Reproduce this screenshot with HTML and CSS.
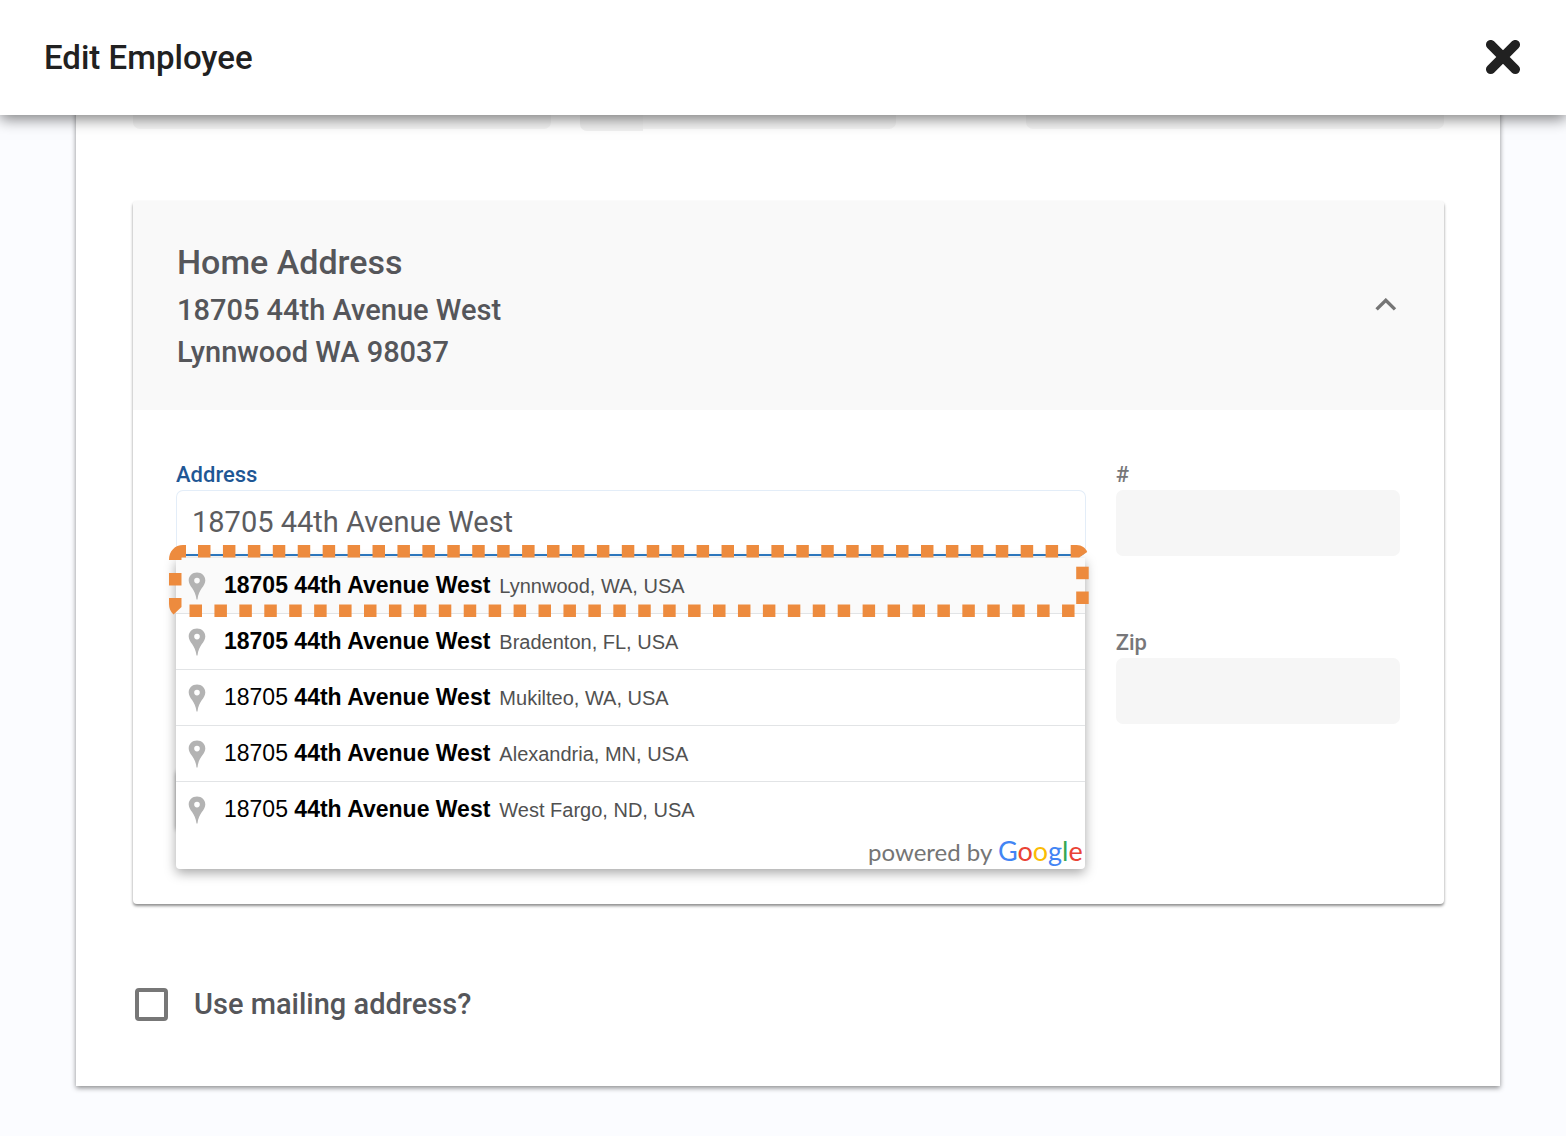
FILE: index.html
```html
<!DOCTYPE html>
<html lang="en">
<head>
  <meta charset="UTF-8">
  <title>Edit Employee</title>
  <link rel="stylesheet" href="styles.css">
</head>
<body>
  <header class="topbar">
    <h1>Edit Employee</h1>
    <button type="button" class="close-btn" aria-label="Close">
      <svg width="36" height="36" viewBox="0 0 36 36">
        <path d="M5.7 4.7 L30.3 29.3 M30.3 4.7 L5.7 29.3" stroke="#212121" stroke-width="9.5" stroke-linecap="round"/>
      </svg>
    </button>
  </header>

  <main class="sheet">
    <!-- end of the previous section, scrolled under the header -->
    <div class="prev-row">
      <input class="field" type="text" aria-label="Email">
      <div class="phone">
        <button type="button" class="country" aria-label="Country code"></button>
        <input class="field" type="tel" aria-label="Phone">
      </div>
      <input class="field" type="text" aria-label="Alternate">
    </div>

    <section class="card">
      <div class="card-header">
        <div>
          <h2>Home Address</h2>
          <p>18705 44th Avenue West<br>Lynnwood WA 98037</p>
        </div>
        <button type="button" class="toggle-btn" aria-label="Collapse">
          <svg width="24" height="16" viewBox="0 0 24 16">
            <path d="M2.6 11.4 L11.8 2.3 L21 11.4" fill="none" stroke="#757575" stroke-width="3.4"/>
          </svg>
        </button>
      </div>

      <div class="card-body">
        <div class="group address">
          <label for="address">Address</label>
          <input class="field active" id="address" type="text" value="18705 44th Avenue West">

          <div class="suggestions">
            <ul>
              <li class="selected">
                <svg class="pin" viewBox="0 0 18 28"><path fill-rule="evenodd" d="M9 0.5 C4.2 0.5 0.7 4 0.7 8.5 C0.7 14.5 7.6 17 8.5 27.5 L9.5 27.5 C10.4 17 17.3 14.5 17.3 8.5 C17.3 4 13.8 0.5 9 0.5 Z M9 5.8 A2.8 2.8 0 1 1 9 11.4 A2.8 2.8 0 1 1 9 5.8 Z"/></svg>
                <span class="query"><b>18705 44th Avenue West</b></span>
                <span class="place">Lynnwood, WA, USA</span>
              </li>
              <li>
                <svg class="pin" viewBox="0 0 18 28"><path fill-rule="evenodd" d="M9 0.5 C4.2 0.5 0.7 4 0.7 8.5 C0.7 14.5 7.6 17 8.5 27.5 L9.5 27.5 C10.4 17 17.3 14.5 17.3 8.5 C17.3 4 13.8 0.5 9 0.5 Z M9 5.8 A2.8 2.8 0 1 1 9 11.4 A2.8 2.8 0 1 1 9 5.8 Z"/></svg>
                <span class="query"><b>18705 44th Avenue West</b></span>
                <span class="place">Bradenton, FL, USA</span>
              </li>
              <li>
                <svg class="pin" viewBox="0 0 18 28"><path fill-rule="evenodd" d="M9 0.5 C4.2 0.5 0.7 4 0.7 8.5 C0.7 14.5 7.6 17 8.5 27.5 L9.5 27.5 C10.4 17 17.3 14.5 17.3 8.5 C17.3 4 13.8 0.5 9 0.5 Z M9 5.8 A2.8 2.8 0 1 1 9 11.4 A2.8 2.8 0 1 1 9 5.8 Z"/></svg>
                <span class="query">18705 <b>44th Avenue West</b></span>
                <span class="place">Mukilteo, WA, USA</span>
              </li>
              <li>
                <svg class="pin" viewBox="0 0 18 28"><path fill-rule="evenodd" d="M9 0.5 C4.2 0.5 0.7 4 0.7 8.5 C0.7 14.5 7.6 17 8.5 27.5 L9.5 27.5 C10.4 17 17.3 14.5 17.3 8.5 C17.3 4 13.8 0.5 9 0.5 Z M9 5.8 A2.8 2.8 0 1 1 9 11.4 A2.8 2.8 0 1 1 9 5.8 Z"/></svg>
                <span class="query">18705 <b>44th Avenue West</b></span>
                <span class="place">Alexandria, MN, USA</span>
              </li>
              <li>
                <svg class="pin" viewBox="0 0 18 28"><path fill-rule="evenodd" d="M9 0.5 C4.2 0.5 0.7 4 0.7 8.5 C0.7 14.5 7.6 17 8.5 27.5 L9.5 27.5 C10.4 17 17.3 14.5 17.3 8.5 C17.3 4 13.8 0.5 9 0.5 Z M9 5.8 A2.8 2.8 0 1 1 9 11.4 A2.8 2.8 0 1 1 9 5.8 Z"/></svg>
                <span class="query">18705 <b>44th Avenue West</b></span>
                <span class="place">West Fargo, ND, USA</span>
              </li>
            </ul>
            <div class="powered">powered by <span class="google"><span class="blue">G</span><span class="red">o</span><span class="yellow">o</span><span class="blue">g</span><span class="green">l</span><span class="red">e</span></span></div>
          </div>

          <!-- dotted highlight round the first suggestion -->
          <svg class="highlight" aria-hidden="true">
            <g fill="none" stroke="#ed8b3e" stroke-width="12.5">
              <svg class="top-dots" height="13"><line x1="29" y1="6.3" x2="100%" y2="6.3" stroke-dasharray="12.5 12.43"/></svg>
              <svg class="bottom-dots" y="59"><line x1="20.5" y1="6.7" x2="100%" y2="6.7" stroke-dasharray="12.5 12.43"/></svg>
            </g>
            <g fill="#ed8b3e">
              <path d="M17 0 V12.5 H12.5 V15 H0 C0 6 6 0 14 0 Z"/>
              <rect x="0" y="28" width="12.5" height="12.5"/>
              <path d="M0 53 H12.5 V62 L4.5 69.5 C1.5 67 0 63 0 59 Z"/>
            </g>
            <svg x="100%" overflow="visible" fill="#ed8b3e">
              <path d="M-18 0 H-12 C-7 0 -3 3 -1.5 7 L-9.5 12.5 H-18 Z"/>
              <rect x="-12.5" y="21.7" width="12.5" height="12.5"/>
              <rect x="-12.5" y="46.5" width="12.5" height="12.5"/>
            </svg>
          </svg>
        </div>

        <div class="group">
          <label for="unit">#</label>
          <input class="field" id="unit" type="text">
        </div>

        <div class="group zip">
          <label for="zip">Zip</label>
          <input class="field" id="zip" type="text">
        </div>

        <div class="panel"></div>
      </div>
    </section>

    <label class="mailing">
      <input type="checkbox">
      <span>Use mailing address?</span>
    </label>
  </main>
</body>
</html>
```

FILE: styles.css
```css
* {
  box-sizing: border-box;
}
body {
  margin: 0;
  min-height: 100vh;
  padding-bottom: 50px;
  background: #fbfcff;
  font-family: Roboto, sans-serif;
  color: #55565a;
}
h1, h2, p, ul {
  margin: 0;
  padding: 0;
}
button {
  border: 0;
  padding: 0;
  background: none;
  cursor: pointer;
}
button svg {
  display: block;
}

/* Header */
.topbar {
  position: relative;
  z-index: 10;
  display: flex;
  align-items: center;
  justify-content: space-between;
  height: 115px;
  padding: 0 45px 0 44px;
  background: #fff;
  box-shadow: 0 4px 14px rgba(0, 0, 0, 0.5);
}
h1 {
  font-size: 33px;
  font-weight: 500;
  color: #212121;
}

/* White sheet */
.sheet {
  margin: 0 66px 0 76px;
  padding: 0 56px 65px 57px;
  background: #fff;
  box-shadow: 0 2px 5px rgba(0, 0, 0, 0.45);
}
.field {
  display: block;
  width: 100%;
  height: 66px;
  padding: 0 16px;
  border: 0;
  border-radius: 7px;
  background: #f6f6f6;
  font-family: Roboto, sans-serif;
  font-size: 29px;
  color: #5c5c5f;
  outline: none;
}
.prev-row {
  display: grid;
  grid-template-columns: 1fr 1fr 1fr;
  gap: 29px;
  margin-top: -52px;
  margin-bottom: 72px;
}
.phone {
  display: flex;
  width: 316px;
  height: 66px;
}
.country {
  flex: none;
  width: 63px;
  height: 68px;
  border-radius: 7px 0 0 7px;
  background: #f2f2f2;
}
.phone .field {
  border-radius: 0 7px 7px 0;
}

/* Address card */
.card {
  border-radius: 4px;
  background: #fff;
  box-shadow: 0 2px 3px rgba(0, 0, 0, 0.45);
}
.card-header {
  display: flex;
  align-items: center;
  justify-content: space-between;
  height: 209px;
  padding: 0 46px 0 44px;
  border-radius: 4px 4px 0 0;
  background: #f9f9f9;
}
h2 {
  margin-bottom: 3px;
  font-size: 34px;
  line-height: 48px;
  font-weight: 500;
}
.card-header p {
  font-size: 29px;
  line-height: 42px;
  font-weight: 500;
}
.card-body {
  display: grid;
  grid-template-columns: 16fr 5fr;
  column-gap: 30px;
  row-gap: 76px;
  padding: 54px 44px 74px 43px;
}
.group label {
  display: block;
  margin-bottom: 4px;
  font-size: 22px;
  line-height: 22px;
  font-weight: 500;
  color: #77777a;
}
.address {
  position: relative;
}
.address label {
  color: #1f5795;
}
.field.active {
  padding: 0 15px 2px;
  border: 1px solid #e3edf8;
  border-bottom: 2px solid #2e7bc4;
  background: #fff;
}
.zip {
  grid-column: 2;
}
.panel {
  height: 60px;
  margin-top: -30px;
  margin-right: 8px;
  border-radius: 4px;
  box-shadow: 0 1px 4px rgba(0, 0, 0, 0.4);
}

/* Autocomplete */
.suggestions {
  position: absolute;
  z-index: 2;
  top: 94px;
  left: 0;
  right: 1px;
  border-radius: 0 0 4px 4px;
  background: #fff;
  box-shadow: 0 4px 12px rgba(0, 0, 0, 0.35);
  font-family: "Liberation Sans", Arial, sans-serif;
  color: #515151;
}
.suggestions ul {
  list-style: none;
}
.suggestions li {
  display: flex;
  align-items: baseline;
  height: 56px;
  padding-left: 12px;
  border-bottom: 1px solid #e2e4e6;
  font-size: 20px;
  line-height: 54px;
  white-space: nowrap;
}
.suggestions li:last-child {
  border-bottom: 0;
}
.suggestions li.selected {
  background: #fafafa;
}
.pin {
  align-self: center;
  width: 18px;
  height: 28px;
  margin-right: 18px;
  fill: #b3b3b3;
}
.query {
  font-size: 23px;
  color: #000;
}
.place {
  margin-left: 9px;
}
.powered {
  height: 31px;
  padding-right: 2px;
  font-family: Lato, sans-serif;
  font-size: 24px;
  line-height: 26px;
  text-align: right;
  color: #757575;
}
.google {
  font-size: 27px;
}
.blue { color: #4285f4; }
.red { color: #ea4335; }
.yellow { color: #fbbc05; }
.green { color: #34a853; }

.highlight {
  position: absolute;
  z-index: 3;
  top: 81px;
  left: -7px;
  width: calc(100% + 10px);
  height: 73px;
  pointer-events: none;
}
.top-dots {
  width: calc(100% - 26px);
}
.bottom-dots {
  width: calc(100% - 10px);
  height: 13px;
}

/* Mailing address */
.mailing {
  display: flex;
  align-items: center;
  gap: 26px;
  margin-top: 84px;
  padding-left: 2px;
  font-size: 29px;
  line-height: 33px;
  font-weight: 500;
}
.mailing input {
  appearance: none;
  width: 33px;
  height: 33px;
  margin: 0;
  border: 4px solid #777;
  border-radius: 4px;
}
```
